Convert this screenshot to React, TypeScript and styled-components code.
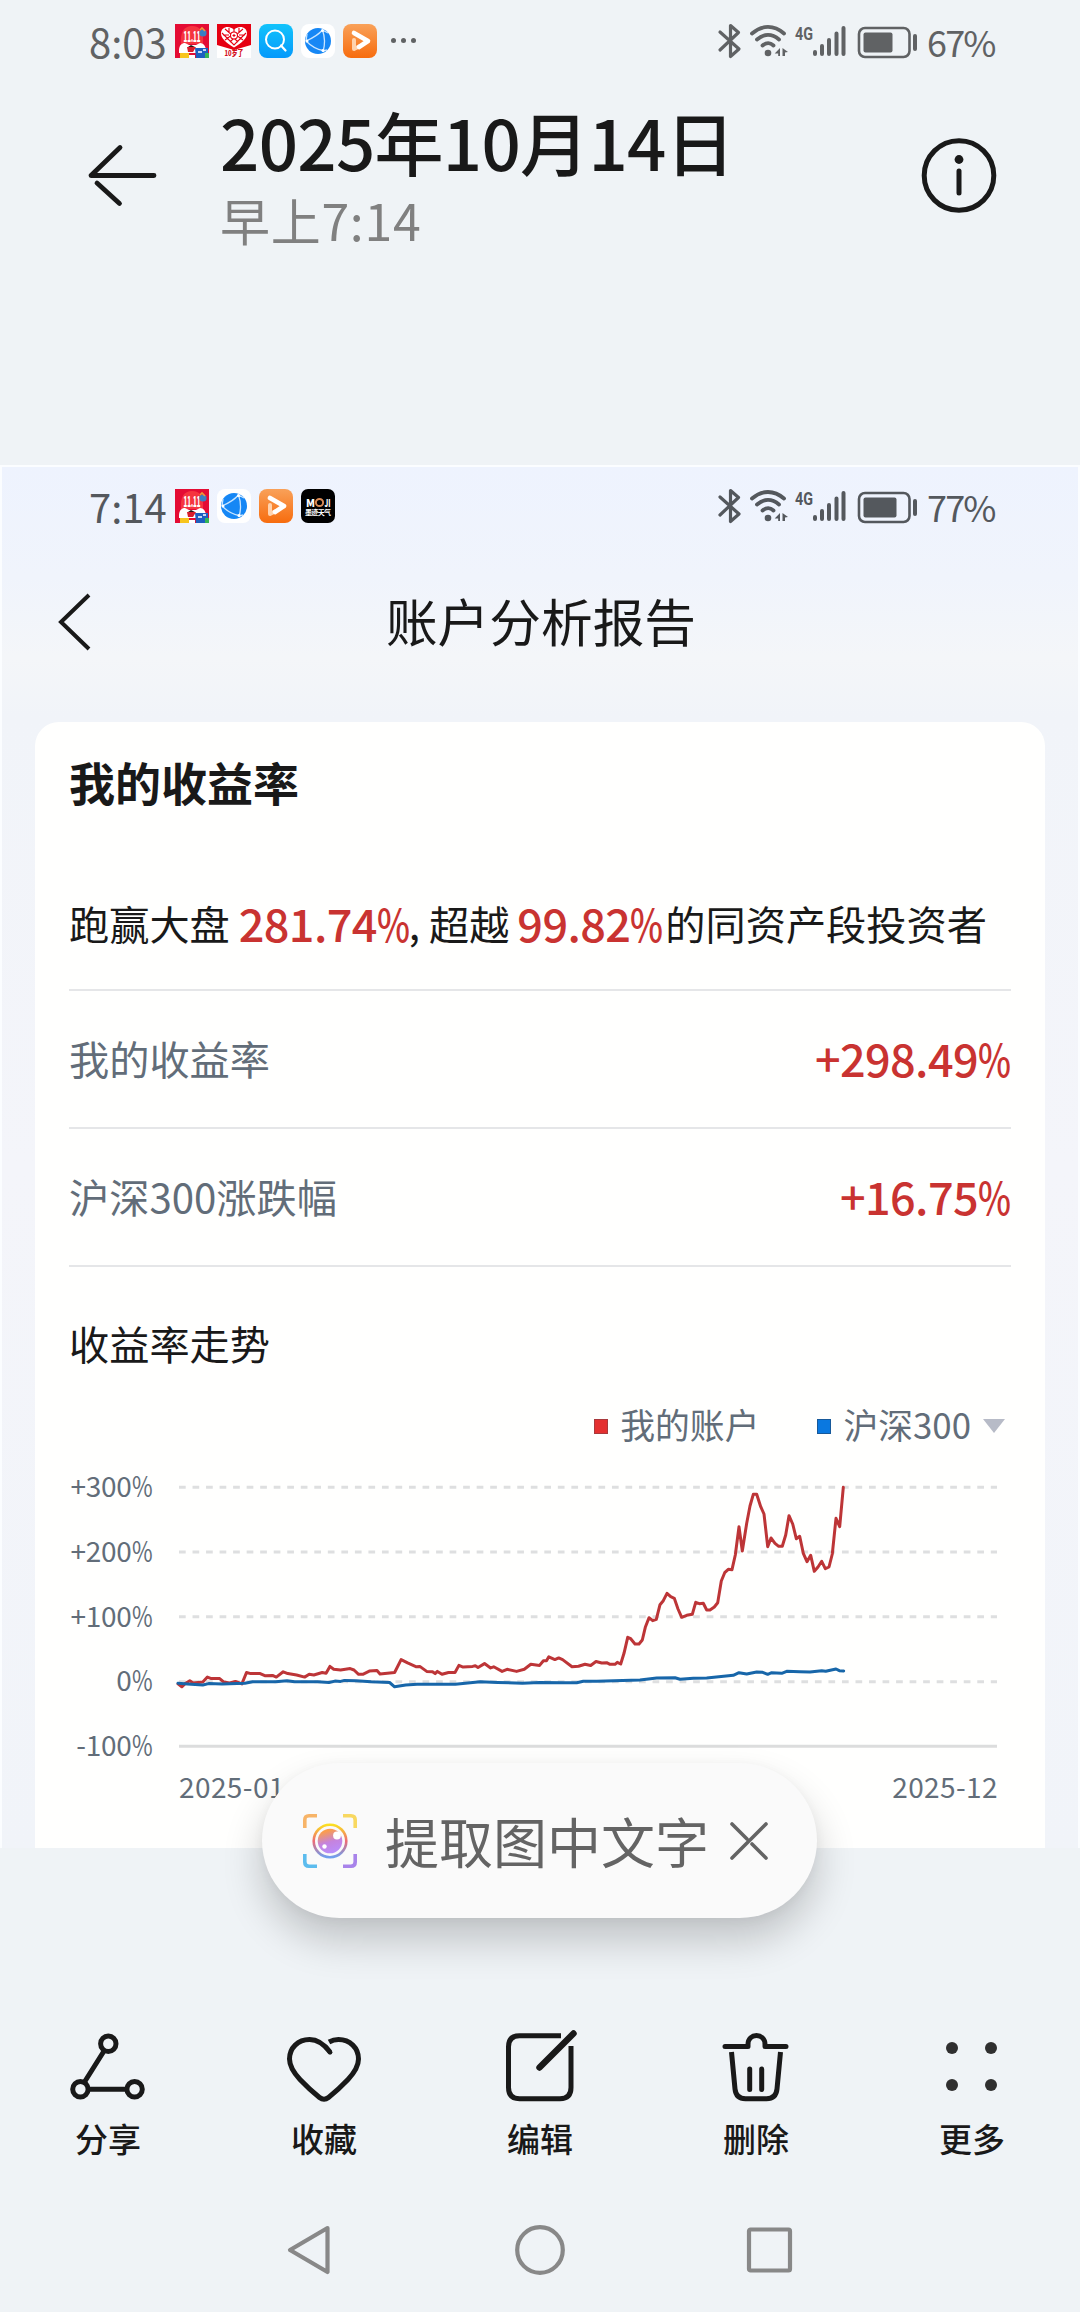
import React from "react";
import styled, { createGlobalStyle } from "styled-components";

const GlobalStyle = createGlobalStyle`
  * { box-sizing: border-box; }
  body {
    margin: 0;
    background: #eff3f6;
    font-family: "Noto Sans CJK SC", "Noto Sans", sans-serif;
    color: #191919;
  }
  svg { display: block; flex: none; overflow: visible; }
`;

const Screen = styled.div`
  position: relative;
  width: 1080px;
  height: 2312px;
  overflow: hidden;
  display: flex;
  flex-direction: column;
`;

/* ---------- status bar ---------- */

const Bar = styled.div<{ $ink: string }>`
  display: flex;
  align-items: center;
  height: 82px;
  padding: 0 84px 0 89px;
  color: ${(p) => p.$ink};
  flex: none;
`;

const Clock = styled.span`
  width: 86px;
  margin-top: -1px;
  font-size: 40px;
  line-height: 40px;
  letter-spacing: 0;
  white-space: nowrap;
`;

const AppIcons = styled.div`
  display: flex;
  align-items: center;
  gap: 8px;
  flex: 1;
`;

const Dots = styled.div`
  display: flex;
  gap: 5px;
  margin: -2px 0 0 6px;
  i {
    width: 5px;
    height: 5px;
    border-radius: 50%;
    background: currentColor;
  }
`;

const Percent = styled.span`
  width: 69px;
  margin-left: 9px;
  margin-top: -1px;
  font-size: 36px;
  line-height: 36px;
  letter-spacing: -1.8px;
  white-space: nowrap;
`;

const SaleIcon = () => (
  <svg width="34" height="34" viewBox="0 0 34 34">
    <rect width="34" height="34" fill="#e40c34" />
    <path d="M6 20C5 8 9 2 17 2s12 5 11 18z" fill="#f5343f" />
    <text x="17" y="17.500" textAnchor="middle" fontSize="14" fontWeight="900" fill="#fff" textLength="17" lengthAdjust="spacingAndGlyphs">11.11</text>
    <circle cx="28" cy="9" r="3.600" fill="#3a7fc4" />
    <path d="M25 6l2-2 3 3" fill="none" stroke="#f29a38" strokeWidth="1.600" />
    <path d="M4 27c0-6 3-8 6-8l4 2h7l4-2c4 0 6 4 6 8v2H4z" fill="#fff" />
    <path d="M12 23h9l-3 5h-5z" fill="#d81e2c" />
    <path d="M13 23l3-2 4 2z" fill="#2a1515" />
    <rect x="5" y="29" width="9" height="5" fill="#f7c51e" />
    <path d="M20 24h13v10H21z" fill="#1d5fc0" />
    <path d="M23 28h4m1-2h3" stroke="#fff" strokeWidth="1.300" />
    <rect x="30" y="29" width="4" height="5" fill="#35b558" />
    <rect x="14" y="31" width="6" height="3" fill="#fff" />
  </svg>
);

const HeartIcon = () => (
  <svg width="34" height="34" viewBox="0 0 34 34">
    <rect width="34" height="34" fill="#fff" />
    <path d="M0 0h34v21L17 26 0 21z" fill="#e60012" />
    <path d="M17 23.500C9 18.500 4 14.500 4 9.500c0-7 8-8.500 13-4 5-4.500 13-3 13 4 0 5-5 9-13 14z" fill="#fff" />
    <g stroke="#e60012" strokeWidth="1.100" fill="none">
      <path d="M5 9l12 12 12-12M8 5l7 6-7 5M26 5l-7 6 7 5M12 4v5M22 4v5M6 11h6M22 11h6M13 18l4-4 4 4M17 4v4" />
      <circle cx="17" cy="11.500" r="3.500" fill="#fff" />
      <path d="M15.500 11.500h3M17 10v3" />
    </g>
    <text x="17" y="31.800" textAnchor="middle" fontSize="7.500" fontWeight="900" fill="#d4101c" textLength="19" lengthAdjust="spacingAndGlyphs">10岁了</text>
  </svg>
);

const SearchIcon = () => (
  <svg width="34" height="34" viewBox="0 0 34 34">
    <defs>
      <linearGradient id="search" x1="0" y1="0" x2="0" y2="1">
        <stop offset="0" stopColor="#12c3fb" />
        <stop offset="1" stopColor="#0599fb" />
      </linearGradient>
    </defs>
    <rect width="34" height="34" rx="8" fill="url(#search)" />
    <circle cx="16" cy="15.500" r="9" fill="none" stroke="#fff" strokeWidth="2" />
    <path d="M22 21.500l4.500 5" stroke="#fff" strokeWidth="2.200" strokeLinecap="round" />
  </svg>
);

const GlobeIcon = () => (
  <svg width="34" height="34" viewBox="0 0 34 34">
    <rect width="34" height="34" rx="8" fill="#fff" />
    <circle cx="17" cy="17" r="13" fill="#1687f5" />
    <path d="M5 17C12 14 18 10 21.500 6M21.500 6C24 13 24 21 22 28M5 17c5 5 11 8.500 17 9.500M21.500 6l5.500 3M22 27l4-1M5 17l1-7" fill="none" stroke="#c9e5ff" strokeWidth="1.300" />
    <circle cx="21.500" cy="6.500" r="1.500" fill="#fff" />
    <circle cx="6" cy="17" r="1.500" fill="#fff" />
    <circle cx="22" cy="26.500" r="1.500" fill="#fff" />
  </svg>
);

const PlayIcon = ({ id }: { id: string }) => (
  <svg width="34" height="34" viewBox="0 0 34 34">
    <defs>
      <linearGradient id={id} x1="0" y1="0" x2="0" y2="1">
        <stop offset="0" stopColor="#f9a159" />
        <stop offset="1" stopColor="#f76c0e" />
      </linearGradient>
    </defs>
    <rect width="34" height="34" rx="8" fill={`url(#${id})`} />
    <path d="M11 16v9l5-2.500" fill="none" stroke="#ffd3ae" strokeWidth="4" strokeLinejoin="round" strokeLinecap="round" />
    <path d="M11 9l14 8-9 6" fill="none" stroke="#fff" strokeWidth="4.600" strokeLinejoin="round" strokeLinecap="round" />
  </svg>
);

const MojiIcon = () => (
  <svg width="34" height="34" viewBox="0 0 34 34">
    <rect width="34" height="34" rx="7" fill="#000" />
    <text x="5" y="17.500" fontSize="10" fontWeight="900" fill="#fff" textLength="9" lengthAdjust="spacingAndGlyphs">M</text>
    <circle cx="18.500" cy="13.500" r="3.600" fill="none" stroke="#d98a55" strokeWidth="2" />
    <text x="23.500" y="17.500" fontSize="10" fontWeight="900" fill="#fff" textLength="6" lengthAdjust="spacingAndGlyphs">JI</text>
    <text x="4" y="26" fontSize="7" fontWeight="700" fill="#fff" textLength="26">墨迹天气</text>
  </svg>
);

const SignalCluster = ({ level }: { level: number }) => (
  <svg width="200" height="36" viewBox="718 22 200 36" fill="none" stroke="currentColor" strokeLinecap="round" strokeLinejoin="round">
    <path d="M720 31l19 17-8.500 7.500V24.500L738.500 31.500 720 49" strokeWidth="3.200" />
    <path d="M752 32.500c10-8.700 22-8.700 32 0M757 38.500c7-6 15-6 22 0M762.500 44.500c4-3.200 7.500-3.200 11 0" strokeWidth="3.800" />
    <circle cx="768" cy="52" r="3.300" fill="currentColor" stroke="none" />
    <path d="M780 47v8h-1.800v-2.500h-3.500zM782.500 47l5.500 4-3 .6V55h-2.500z" fill="currentColor" stroke="none" />
    <text x="795" y="39" fontSize="19" fontWeight="700" fontFamily="Roboto, sans-serif" fill="currentColor" stroke="none" textLength="18" lengthAdjust="spacingAndGlyphs">4G</text>
    <path d="M815 51v2M822 45v8M829 39v14M836.500 32.500V53M843.500 27v26" strokeWidth="4" />
    <rect x="859" y="27" width="50.500" height="29" rx="6" strokeWidth="2.600" />
    <rect x="863.500" y="31.500" width={level} height="20" rx="2" fill="currentColor" stroke="none" />
    <path d="M915 35v13" strokeWidth="4" />
  </svg>
);

const StatusBar = ({ time, percent, level, ink, children }: { time: string; percent: string; level: number; ink: string; children: React.ReactNode }) => (
  <Bar $ink={ink}>
    <Clock>{time}</Clock>
    <AppIcons>{children}</AppIcons>
    <SignalCluster level={level} />
    <Percent>{percent}</Percent>
  </Bar>
);

/* ---------- gallery header ---------- */

const Header = styled.header`
  display: flex;
  align-items: center;
  height: 188px;
  padding: 0 83px 0 86px;
  flex: none;
`;

const HeadText = styled.div`
  flex: 1;
  padding: 0 0 0 60px;
  margin-top: 8px;
`;

const DateTitle = styled.h1`
  margin: 0;
  font-size: 69px;
  font-weight: 500;
  line-height: 76px;
  letter-spacing: -0.7px;
`;

const TimeText = styled.div`
  margin-top: 2px;
  font-size: 50px;
  line-height: 76px;
  font-weight: 400;
  letter-spacing: 0.7px;
  color: #808080;
`;

/* ---------- photographed report ---------- */

const Photo = styled.main`
  margin-top: 195px;
  height: 1383px;
  flex: none;
  border: 2px solid #fbfdff;
  border-bottom: 0;
  background: linear-gradient(#eef3fe 0, #f0f4fc 110px, #f4f6f9 190px, #f1f4f9 250px, #f4f5fa 700px, #f1f4f9 100%);
  display: flex;
  flex-direction: column;
`;

const PhotoStatus = styled.div`
  margin: -2px -2px 0;
`;

const ReportHead = styled.div`
  display: grid;
  grid-template-columns: 200px 1fr 200px;
  align-items: center;
  height: 148px;
  padding: 0 0 0 56px;
  margin-right: 54px;
`;

const ReportTitle = styled.h2`
  margin: -2px 0 0;
  font-size: 51.700px;
  font-weight: 400;
  line-height: 60px;
  text-align: center;
  white-space: nowrap;
`;

const Card = styled.section`
  flex: 1;
  margin: 27px 33px 0;
  padding: 0 34px;
  border-radius: 24px 24px 0 0;
  background: #fffffe;
`;

const CardTitle = styled.h3`
  margin: 0;
  padding: 29px 0 3px;
  font-size: 46px;
  font-weight: 700;
  line-height: 60px;
`;

const Summary = styled.p`
  margin: 45px 0 0;
  height: 132px;
  display: flex;
  align-items: center;
  padding: 0 0 3px;
  font-size: 40.200px;
  white-space: pre;
  border-bottom: 2px solid #e5e6e8;
`;

const Red = styled.b<{ $width?: number; $left?: number }>`
  font-size: 45px;
  font-weight: 500;
  line-height: 50px;
  letter-spacing: -0.6px;
  color: #c93331;
  white-space: nowrap;
  width: ${(p) => (p.$width ? `${p.$width}px` : "auto")};
  margin-left: ${(p) => p.$left ?? 0}px;
`;

const Pct = styled.span`
  display: inline-block;
  width: 33px;
  transform: scaleX(0.78);
  transform-origin: left;
`;

const Row = styled.div`
  display: flex;
  justify-content: space-between;
  align-items: center;
  height: 138px;
  padding: 0 0 3px;
  font-size: 40.200px;
  color: #626d79;
  border-bottom: 2px solid #e5e6e8;
`;

const TrendTitle = styled.h4`
  margin: 0;
  padding: 46px 0 2px;
  font-size: 40.200px;
  font-weight: 400;
  line-height: 60px;
`;

const Legend = styled.div`
  display: flex;
  justify-content: flex-end;
  align-items: center;
  height: 50px;
  margin: 26px 6px 0 0;
  font-size: 34.800px;
  color: #626d79;
`;

const LegendItem = styled.div`
  display: flex;
  align-items: center;
  gap: 12px;
  margin-left: 58px;
`;

const LegendText = styled.span`
  margin-top: -5px;
`;

const Swatch = styled.span<{ $fill: string; $edge: string }>`
  width: 14px;
  height: 15px;
  background: ${(p) => p.$fill};
  border: 1px solid ${(p) => p.$edge};
`;

const Caret = styled.span`
  margin-left: 0;
  border: 11.500px solid transparent;
  border-top: 14px solid #b7bbc7;
  border-bottom: 0;
`;

const ChartRow = styled.div`
  display: flex;
  justify-content: space-between;
  margin: 22px 13px 0 0;
`;

const Axis = styled.div`
  display: flex;
  flex-direction: column;
  justify-content: space-between;
  align-items: flex-end;
  width: 83px;
  height: 287px;
  margin-top: -2px;
`;

const Tick = styled.span`
  font-size: 28px;
  line-height: 28px;
  letter-spacing: -0.300px;
  color: #626d79;
  white-space: nowrap;
`;

const TickPct = styled.span`
  display: inline-block;
  width: 20.500px;
  transform: scaleX(0.8);
  transform-origin: left;
`;

const Dates = styled.div`
  display: flex;
  justify-content: space-between;
  margin: 12px 13px 0 110px;
  ${Tick} { letter-spacing: 0.400px; }
`;

const account =
  "0,206.9 3.8,209.8 7.6,206.2 11.8,203.7 15.3,205.9 24.8,205.1 29.4,200.1 33.3,201.6 41.7,201.6 45.9,205.1 51.6,205.9 57.4,204.4 63.9,206.9 68.5,195.5 72.7,196.6 82.2,196.6 86.8,198.7 94.5,198.4 98.3,200.1 105.2,194.8 109.8,196.6 118.6,198 126.6,200.1 131.2,197.3 135.8,198 144.2,195.5 148.1,196.2 151.9,189.4 155.7,192.3 162.6,193 172.2,191.6 176,193 180.6,197.3 184.8,197.3 191.3,194.1 199,193.4 202,196.9 216.6,195.5 223.1,182.6 229.6,185.9 238.4,189.8 241.8,189.4 248.7,194.4 254.5,194.8 257.1,196.6 259.4,194.4 264,197.3 270.5,195.5 277,195.5 280.9,188.4 285.1,190.1 294.6,189.4 297.3,188.7 300,190.5 306.5,186.6 312.6,190.9 315.7,189.8 324.1,194.4 329.1,192.3 338.6,194.4 346.3,192.3 352.8,187.3 361.6,188.4 365.4,183.7 368.5,183.7 370.8,179.8 376.9,182.6 380.7,180.9 384.6,182.6 394,189.7 400.5,189.3 407,187.2 412.7,188.5 418,184.5 423.7,186 428.7,185.7 432,187.3 437,187.3 439.3,185.3 442.7,187 446,176.3 449.7,160.3 452.7,161.7 457,167 461,167 464.3,163 467.3,150.3 471,140.7 474.7,143.7 478.3,142.3 482,127.7 485.3,123.7 489,116.3 492.7,119.7 496.3,121.3 500,132 503.7,140.3 508.7,138.3 514.3,137.3 517.7,125.3 521.3,126.7 525.3,126.3 528.7,133 532,133 536.3,130 539.7,125.7 543.3,104 546.7,95.7 550.3,92.3 554,92.7 557.3,78 561,49.7 564.3,74 568.7,46.3 572,29 575.3,17.3 578.7,17.3 582.7,29.7 586,37 589.7,69.7 593,61 597,66.3 600.7,69.3 604.3,69.3 607.7,58 611,38.7 614.7,47 618.3,61.7 621.7,59.3 625.3,76.3 629,84.7 632.7,78.3 636.3,94.3 640,90 643.7,84.3 647.3,91.7 651,90 654.3,77 658,41.3 661.7,49.7 665.3,10.3";

const index300 =
  "0,206.2 9.5,206.9 24.8,208 30.6,206.6 44,206.9 66.9,206.2 74.6,204.8 97.5,204.8 109,203.7 116.7,204.8 139.6,204.8 151,205.5 156.9,204.1 162.6,204.4 166.4,203.4 177.9,203.7 193.2,204.8 211.6,205.5 216.6,209.8 227.7,208 239.1,207.3 277.4,207.3 302.3,204.8 319.5,205.5 344.4,206.2 361.6,205.5 386,205.700 398.7,205.8 405.3,204.2 418.7,204.3 462,203 478.7,201 497,200.7 502,202.3 515.3,201.3 528.7,201 555.3,198.3 561,195.7 568.7,197 578.7,195 584.7,195.3 589.7,197.3 593.7,195.7 603.7,196.3 608.7,194.3 622,194.7 632,195 643.7,193.7 647.7,194.3 658,192 661.3,193.7 665.7,194";

const Chart = () => (
  <svg width="820" height="287" viewBox="0 -4 820 287" fill="none">
    {[10.3, 75, 139.7, 204.7].map((y) => (
      <path key={y} d={`M1 ${y}H819`} stroke="#dedfe0" strokeWidth="3" strokeDasharray="6.700 6.830" />
    ))}
    <path d="M1 269.300H819" stroke="#dcdddd" strokeWidth="3" />
    <polyline points={account} stroke="#bd3537" strokeWidth="3" strokeLinejoin="round" strokeLinecap="round" />
    <polyline points={index300} stroke="#1766a9" strokeWidth="3" strokeLinejoin="round" strokeLinecap="round" />
  </svg>
);

/* ---------- floating "extract text" pill ---------- */

const Pill = styled.div`
  position: absolute;
  left: 262px;
  top: 1763px;
  width: 555px;
  height: 155px;
  border-radius: 78px;
  background: #fafafa;
  box-shadow: 0 22px 40px rgba(0, 0, 0, 0.2), 0 2px 12px rgba(0, 0, 0, 0.04);
  display: flex;
  align-items: center;
  padding: 0 0 0 41px;
  color: #646464;
`;

const PillText = styled.span`
  margin: 1px 24px 0 28px;
  font-size: 54px;
  line-height: 60px;
  font-weight: 400;
  white-space: nowrap;
  width: 321px;
`;

const ScanIcon = () => (
  <svg width="54" height="54" viewBox="0 0 54 54" fill="none">
    <defs>
      <linearGradient id="ring" x1="0" y1="0" x2="0" y2="1">
        <stop offset="0" stopColor="#fbe020" />
        <stop offset="0.5" stopColor="#ee6a74" />
        <stop offset="1" stopColor="#6e9ff0" />
      </linearGradient>
      <linearGradient id="lens" x1="0.3" y1="0" x2="0.6" y2="1">
        <stop offset="0.1" stopColor="#fb9d4c" />
        <stop offset="0.55" stopColor="#c583de" />
        <stop offset="1" stopColor="#b98dfb" />
      </linearGradient>
    </defs>
    <path d="M1.800 14V6q0-4.200 4.200-4.200h8" stroke="#f7b468" strokeWidth="3.600" />
    <path d="M40 1.800h8q4.200 0 4.200 4.200v8" stroke="#f8d860" strokeWidth="3.600" />
    <path d="M1.800 40v8q0 4.200 4.200 4.200h8" stroke="#5cbcee" strokeWidth="3.600" />
    <path d="M40 52.200h8q4.200 0 4.200-4.200v-8" stroke="#a883ea" strokeWidth="3.600" />
    <circle cx="27" cy="27" r="16.300" stroke="url(#ring)" strokeWidth="2.600" />
    <circle cx="27" cy="27" r="12.300" fill="url(#lens)" />
    <circle cx="34" cy="21.500" r="3.900" fill="#fff" />
    <circle cx="21.500" cy="32.500" r="2.200" fill="#fff" />
  </svg>
);

/* ---------- bottom actions + navigation ---------- */

const Actions = styled.nav`
  display: grid;
  grid-template-columns: repeat(5, 216px);
  margin-top: 180px;
  flex: none;
`;

const Action = styled.div`
  display: flex;
  flex-direction: column;
  align-items: center;
  gap: 14px;
  font-size: 33px;
  line-height: 40px;
  font-weight: 500;
`;

const ActionGlyph = ({ children }: { children: React.ReactNode }) => (
  <svg width="80" height="76" viewBox="-40 0 80 76" fill="none" stroke="#191919" strokeWidth="5" strokeLinecap="round" strokeLinejoin="round">
    {children}
  </svg>
);

const NavKeys = styled.div`
  display: flex;
  align-items: center;
  margin-top: 66px;
  padding-left: 283px;
  height: 52px;
  svg:nth-child(2) { margin-left: 181px; }
  svg:nth-child(3) { margin-left: 175px; }
`;

const NavGlyph = ({ children }: { children: React.ReactNode }) => (
  <svg width="52" height="52" viewBox="0 0 52 52" fill="none" stroke="#888" strokeWidth="4.200" strokeLinejoin="round">
    {children}
  </svg>
);

export default function App() {
  return (
    <Screen>
      <GlobalStyle />
      <StatusBar time="8:03" percent="67%" level={29} ink="#606264">
        <SaleIcon />
        <HeartIcon />
        <SearchIcon />
        <GlobeIcon />
        <PlayIcon id="playTop" />
        <Dots><i /><i /><i /></Dots>
      </StatusBar>

      <Header>
        <svg width="74" height="74" viewBox="86 138 74 74" fill="none" stroke="#191919" strokeWidth="4.800" strokeLinecap="round">
          <path d="M154 174.500H91L120 146.500" strokeLinejoin="round" />
          <path d="M97 182L119.500 202.500" />
        </svg>
        <HeadText>
          <DateTitle>2025年10月14日</DateTitle>
          <TimeText>早上7:14</TimeText>
        </HeadText>
        <svg width="76" height="76" viewBox="-38 -38 76 76" fill="none" stroke="#191919" strokeWidth="5" strokeLinecap="round">
          <circle cy="-0.500" r="34.800" />
          <circle cy="-16.500" r="4.400" fill="#191919" stroke="none" />
          <path d="M0-5V17" />
        </svg>
      </Header>

      <Photo>
        <PhotoStatus>
          <StatusBar time="7:14" percent="77%" level={33} ink="#54585d">
            <SaleIcon />
            <GlobeIcon />
            <PlayIcon id="playPhoto" />
            <MojiIcon />
          </StatusBar>
        </PhotoStatus>
        <ReportHead>
          <svg width="32" height="58" viewBox="0 0 32 58" fill="none" stroke="#191919" strokeWidth="4">
            <path d="M31 3L3 30L31 57" />
          </svg>
          <ReportTitle>账户分析报告</ReportTitle>
        </ReportHead>
        <Card>
          <CardTitle>我的收益率</CardTitle>
          <Summary>
            跑赢大盘
            <Red $width={170} $left={9}>281.74<Pct>%</Pct></Red>, 超越
            <Red $width={148} $left={8}>99.82<Pct>%</Pct></Red>
            <span>的同资产段投资者</span>
          </Summary>
          <Row>
            <span>我的收益率</span>
            <Red>+298.49<Pct>%</Pct></Red>
          </Row>
          <Row>
            <span>沪深300涨跌幅</span>
            <Red>+16.75<Pct>%</Pct></Red>
          </Row>
          <TrendTitle>收益率走势</TrendTitle>
          <Legend>
            <LegendItem>
              <Swatch $fill="#e43030" $edge="#a8393c" />
              <LegendText>我的账户</LegendText>
            </LegendItem>
            <LegendItem>
              <Swatch $fill="#0a78e0" $edge="#17599a" />
              <LegendText>沪深300</LegendText>
              <Caret />
            </LegendItem>
          </Legend>
          <ChartRow>
            <Axis>
              {["+300", "+200", "+100", "0", "-100"].map((t) => (
                <Tick key={t}>{t}<TickPct>%</TickPct></Tick>
              ))}
            </Axis>
            <Chart />
          </ChartRow>
          <Dates>
            <Tick>2025-01</Tick>
            <Tick>2025-12</Tick>
          </Dates>
        </Card>
      </Photo>

      <Actions>
        <Action>
          <ActionGlyph>
            <circle cx="0.300" cy="15.700" r="7.700" />
            <circle cx="-27.600" cy="61.300" r="7.700" />
            <circle cx="26.600" cy="61.300" r="7.700" />
            <path d="M-4 23L-23.500 54M-19.500 61.300H18.500" />
          </ActionGlyph>
          分享
        </Action>
        <Action>
          <ActionGlyph>
            <path d="M6 24C0 16-6 11.500-14.500 11.500C-26 11.500-34.500 20-34.500 31C-34.500 39-30 45-24 51.500Q-15 61-4.500 69.500Q0 73 4.500 69.500Q15 61 24 51.500C30 45 34.500 39 34.500 31C34.500 20 26 11.500 14.500 11.500Q9.500 11.500 5 14" strokeLinecap="butt" />
            <circle cx="6" cy="24.300" r="2.400" fill="#191919" stroke="none" />
          </ActionGlyph>
          收藏
        </Action>
        <Action>
          <ActionGlyph>
            <path d="M21 7.800H-20.500Q-31.500 7.800-31.500 18.800V59.500Q-31.500 70.700-20.500 70.700H20Q31 70.700 31 59.500V18" strokeLinecap="butt" />
            <path d="M-0.500 39.500L33.500 5.500" strokeWidth="6.400" />
          </ActionGlyph>
          编辑
        </Action>
        <Action>
          <ActionGlyph>
            <path d="M-31 18.500H-8V16.500C-8 4.500 9 4.500 9 16.500V18.500H30" />
            <path d="M-24.500 24L-21 61Q-20 70.700-10.500 70.700H10.500Q20 70.700 21 61L24.500 24" strokeLinecap="butt" />
            <path d="M-6.300 41V61.500M5.700 41V61.500" />
          </ActionGlyph>
          删除
        </Action>
        <Action>
          <ActionGlyph>
            <g fill="#2f2f2f" stroke="none">
              <circle cx="-20" cy="20" r="6" />
              <circle cx="19" cy="20" r="6" />
              <circle cx="-20" cy="57" r="6" />
              <circle cx="19" cy="57" r="6" />
            </g>
          </ActionGlyph>
          更多
        </Action>
      </Actions>

      <NavKeys>
        <NavGlyph><path d="M44.500 4L7 26L44.500 48Z" /></NavGlyph>
        <NavGlyph><circle cx="24" cy="26" r="22.800" /></NavGlyph>
        <NavGlyph><rect x="6" y="5.500" width="41" height="41" rx="1.500" /></NavGlyph>
      </NavKeys>

      <Pill>
        <ScanIcon />
        <PillText>提取图中文字</PillText>
        <svg width="38" height="38" viewBox="0 0 38 38" fill="none" stroke="#646464" strokeWidth="3.600" strokeLinecap="round">
          <path d="M36 2L2 36M2 2L17 17M22 22L36 36" />
        </svg>
      </Pill>
    </Screen>
  );
}
